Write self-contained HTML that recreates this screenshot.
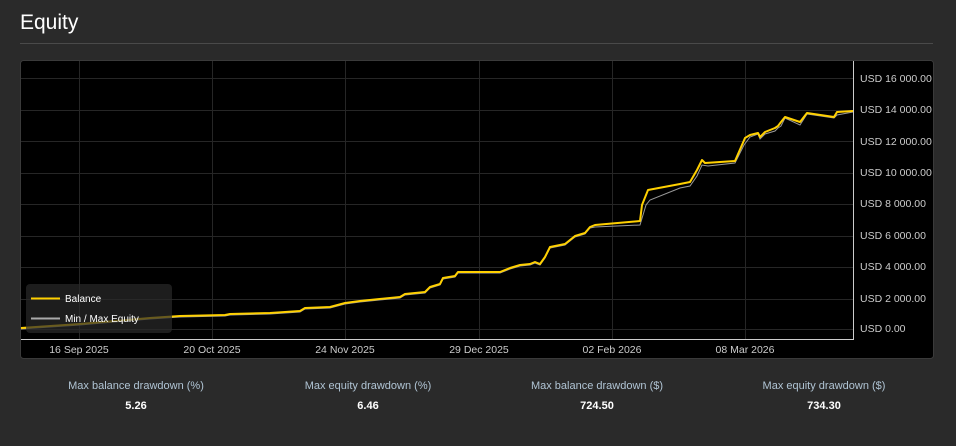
<!DOCTYPE html>
<html><head><meta charset="utf-8"><style>
html,body{margin:0;padding:0;background:#2a2a2a;width:956px;height:446px;overflow:hidden;font-family:"Liberation Sans",sans-serif}
h1{position:absolute;left:20px;top:11px;margin:0;font-size:21px;font-weight:normal;color:#fff}
.hr{position:absolute;left:20px;top:43px;width:913px;height:1px;background:#4a4a4a}
.stat{position:absolute;top:380px;width:220px;text-align:center}
.stat .l{font-size:11px;color:#b0c4d4}
.stat .v{font-size:11px;color:#fff;font-weight:bold;margin-top:8px}
</style></head><body>
<h1>Equity</h1>
<div class="hr"></div>
<svg style="position:absolute;left:0;top:0" width="956" height="446">
<rect x="20.5" y="60.5" width="913" height="298" rx="3" fill="#000" stroke="#3a3a3a"/>
<g stroke="#262626" stroke-width="1">
<line x1="21" x2="853" y1="78.5" y2="78.5"/><line x1="21" x2="853" y1="110.5" y2="110.5"/>
<line x1="21" x2="853" y1="141.5" y2="141.5"/><line x1="21" x2="853" y1="173.5" y2="173.5"/>
<line x1="21" x2="853" y1="204.5" y2="204.5"/><line x1="21" x2="853" y1="236.5" y2="236.5"/>
<line x1="21" x2="853" y1="267.5" y2="267.5"/><line x1="21" x2="853" y1="299.5" y2="299.5"/>
<line x1="21" x2="853" y1="329.5" y2="329.5"/>
<line x1="79.5" x2="79.5" y1="61" y2="339"/><line x1="212.5" x2="212.5" y1="61" y2="339"/>
<line x1="345.5" x2="345.5" y1="61" y2="339"/><line x1="479.5" x2="479.5" y1="61" y2="339"/>
<line x1="612.5" x2="612.5" y1="61" y2="339"/><line x1="745.5" x2="745.5" y1="61" y2="339"/>
</g>
<line x1="21" x2="854" y1="339.5" y2="339.5" stroke="#ccc"/>
<line x1="853.5" x2="853.5" y1="61" y2="340" stroke="#ccc"/>
<g fill="#ccc" font-size="10.5">
<text x="860" y="82">USD 16 000.00</text><text x="860" y="113">USD 14 000.00</text>
<text x="860" y="145">USD 12 000.00</text><text x="860" y="176">USD 10 000.00</text>
<text x="860" y="207">USD 8 000.00</text><text x="860" y="239">USD 6 000.00</text>
<text x="860" y="270">USD 4 000.00</text><text x="860" y="302">USD 2 000.00</text>
<text x="860" y="332">USD 0.00</text>
</g>
<g fill="#ccc" font-size="10.5" text-anchor="middle">
<text x="79" y="353">16 Sep 2025</text><text x="212" y="353">20 Oct 2025</text>
<text x="345" y="353">24 Nov 2025</text><text x="479" y="353">29 Dec 2025</text>
<text x="612" y="353">02 Feb 2026</text><text x="745" y="353">08 Mar 2026</text>
</g>
<polyline fill="none" stroke="#999" stroke-width="1" points="21,329 80,325 150,319 180,317 225,316 230,315 270,314 300,312 305,309 330,308 345,304 360,302 400,298 405,295 425,293 430,288 440,285 443,279 455,277 458,273 500,273 510,269 520,266 530,265 535,263 540,265 545,258 550,248 565,245 570,241 575,237 585,234 590,228 595,227 640,225 646,205 650,200 680,188 690,186 697,176 702,165 708,166 735,163 744,145 750,137 758,134 760,139 765,134 775,131 778,128 781,126 785,118 800,125 807,114 834,118 837,115 853,112"/>
<polyline fill="none" stroke="#ffd000" stroke-width="2" stroke-linejoin="round" points="21,328 80,324 150,318 180,316 225,315 230,314 270,313 300,311 305,308 330,307 345,303 360,301 400,297 405,294 425,292 430,287 440,284 443,278 455,276 458,272 500,272 510,268 520,265 530,264 535,262 540,264 545,257 550,247 565,244 570,240 575,236 585,233 590,227 595,225 640,221 642,205 648,190 680,184 690,182 697,170 702,160 705,163 735,161 745,138 750,135 758,133 760,137 765,132 775,128 778,126 781,122 785,117 800,122 807,113 834,117 837,112 853,111"/>
<rect x="26" y="284" width="146" height="49" rx="4" fill="#2a2a2a" fill-opacity="0.7"/>
<line x1="31" x2="60" y1="298.5" y2="298.5" stroke="#ffd000" stroke-width="2"/>
<line x1="31" x2="60" y1="318.5" y2="318.5" stroke="#aaa" stroke-width="2"/>
<text x="65" y="302" fill="#fff" font-size="10">Balance</text>
<text x="65" y="322" fill="#fff" font-size="10">Min / Max Equity</text>
</svg>
<div class="stat" style="left:26px"><div class="l">Max balance drawdown (%)</div><div class="v">5.26</div></div>
<div class="stat" style="left:258px"><div class="l">Max equity drawdown (%)</div><div class="v">6.46</div></div>
<div class="stat" style="left:487px"><div class="l">Max balance drawdown ($)</div><div class="v">724.50</div></div>
<div class="stat" style="left:714px"><div class="l">Max equity drawdown ($)</div><div class="v">734.30</div></div>
</body></html>
